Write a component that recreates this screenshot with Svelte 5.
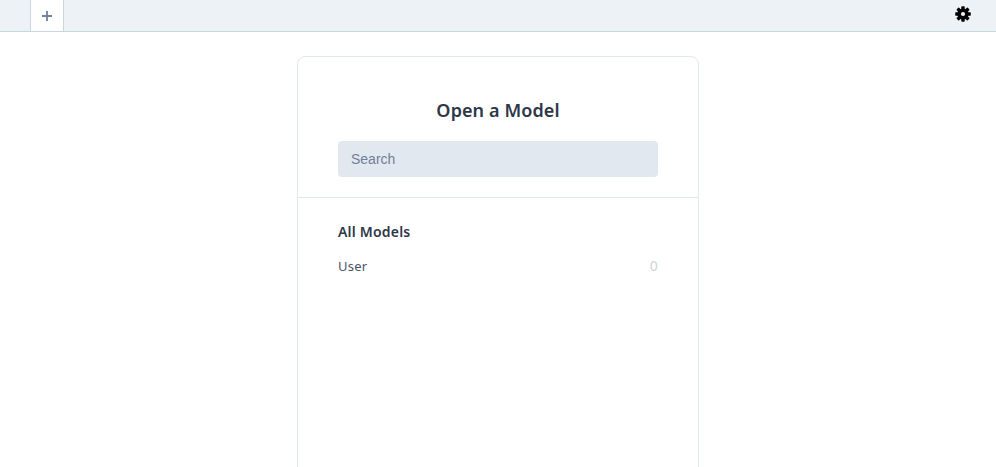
<script>
  const models = [{ name: "User", count: 0 }];
  const teeth = [0, 45, 90, 135];
</script>

<div class="page">
  <div class="topbar">
    <button class="new-tab" aria-label="New tab">
      <svg viewBox="0 0 12 12" width="12" height="12">
        <path d="M6 1v10M1 6h10" stroke="#718096" stroke-width="1.8" fill="none" />
      </svg>
    </button>
    <button class="settings" aria-label="Settings">
      <svg viewBox="0 0 16 16" width="16" height="16">
        <circle cx="8" cy="8" r="5.6" fill="#000" />
        {#each teeth as angle}
          <rect x="6.3" y="0.2" width="3.4" height="15.6" rx="0.7" fill="#000" transform="rotate({angle} 8 8)" />
        {/each}
        <circle cx="8" cy="8" r="2.1" fill="#edf2f7" />
      </svg>
    </button>
  </div>

  <div class="card">
    <div class="card-head">
      <h2>Open a Model</h2>
      <input type="text" placeholder="Search" />
    </div>
    <div class="card-body">
      <h3>All Models</h3>
      {#each models as model}
        <div class="model-row">
          <span>{model.name}</span>
          <span class="count">{model.count}</span>
        </div>
      {/each}
    </div>
  </div>
</div>

<style>
  :global(body) {
    margin: 0;
    background: #fff;
    overflow: hidden;
  }

  .page {
    height: 467px;
    overflow: hidden;
    font-family: "Noto Sans", "Open Sans", sans-serif;
    color: #2d3748;
  }

  .topbar {
    display: flex;
    justify-content: space-between;
    align-items: flex-start;
    height: 31px;
    padding-left: 30px;
    padding-right: 25px;
    background: #edf2f7;
    border-bottom: 1px solid #cbd5e0;
  }

  .new-tab {
    display: flex;
    align-items: center;
    justify-content: center;
    width: 34px;
    height: 31px;
    padding: 0;
    background: #fff;
    border: 1px solid #cbd5e0;
    border-width: 0 1px;
    cursor: pointer;
  }

  .settings {
    display: flex;
    align-items: center;
    justify-content: center;
    width: 16px;
    height: 28px;
    padding: 0;
    background: none;
    border: none;
    cursor: pointer;
  }

  .card {
    box-sizing: border-box;
    width: 402px;
    height: 600px;
    margin: 24px auto 0;
    background: #fff;
    border: 1px solid #e2e8f0;
    border-radius: 8px;
  }

  .card-head {
    display: flex;
    flex-direction: column;
    padding: 39px 40px 20px;
    border-bottom: 1px solid #e2e8f0;
  }

  h2 {
    margin: 0 0 17px;
    font-size: 18px;
    line-height: 28px;
    font-weight: 600;
    letter-spacing: 0.1px;
    text-align: center;
  }

  input {
    box-sizing: border-box;
    width: 100%;
    height: 36px;
    padding: 0 13px;
    font-family: "Liberation Sans", Arial, sans-serif;
    font-size: 14px;
    color: #2d3748;
    background: #e2e8f0;
    border: 0;
    border-radius: 4px;
    outline: none;
  }

  input::placeholder {
    color: #718096;
    opacity: 1;
  }

  .card-body {
    padding: 24px 40px;
  }

  h3 {
    margin: 0 0 14px;
    font-size: 14px;
    line-height: 20px;
    font-weight: 600;
    letter-spacing: 0.2px;
  }

  .model-row {
    display: flex;
    justify-content: space-between;
    font-size: 13px;
    line-height: 20px;
    letter-spacing: 0.2px;
    color: #4a5568;
  }

  .count {
    font-size: 14px;
    color: #cbd5e0;
  }
</style>
